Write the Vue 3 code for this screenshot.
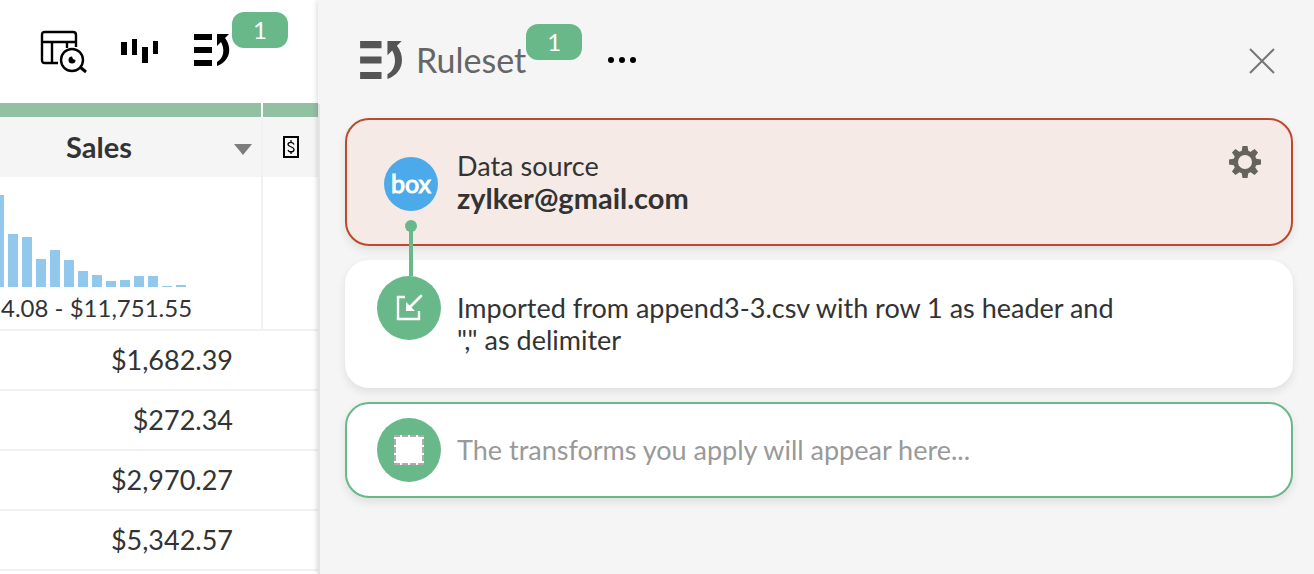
<script setup>
const bars = [92, 53, 50, 28, 37, 27, 16, 12, 6, 7, 11, 11, 1, 2]
const rows = ['$1,682.39', '$272.34', '$2,970.27', '$5,342.57', '']
</script>

<template>
  <div class="page">
    <main class="sheet">
      <div class="toolbar">
        <button type="button" class="tool" aria-label="Preview table">
          <svg width="48" height="44" viewBox="0 0 48 44" fill="none" stroke="#000" stroke-width="2.400">
            <path d="M18 33H5q-3 0-3-3V5q0-3 3-3h28q3 0 3 3v12M2 12h34M12 12v21M27 12v6" />
            <circle cx="32" cy="30" r="11" />
            <path d="M40 37l6 5" stroke-width="3" />
            <path d="M32 26.500a3.500 3.500 0 1 0 3.500 3.500l-2.500-1z" fill="#000" stroke="none" />
          </svg>
        </button>
        <button type="button" class="tool" aria-label="Data quality">
          <svg width="40" height="28" viewBox="0 0 40 28" fill="#000">
            <path d="M1 6h6v13H1zM12 3h5v16h-5zM22 11h6v16h-6zM33 5h5v13h-5z" />
          </svg>
        </button>
        <button type="button" class="tool" aria-label="Ruleset, 1 rule">
          <svg width="40" height="32" viewBox="-2 0 40 32" fill="#000">
            <path d="M0 0h18v6H0zM0 13h18v6H0zM0 26h18v6H0zM23 0h12l-4 4c7 9 6 23-8 28v-4c7-4 8-13 4-20l-4 4z" />
          </svg>
          <span class="badge tool-badge">1</span>
        </button>
      </div>

      <table class="grid">
        <colgroup><col class="col-sales"><col></colgroup>
        <thead>
          <tr class="head">
            <th scope="col">
              <div class="head-cell">
                <span class="name">Sales</span>
                <button type="button" class="caret" aria-label="Column options">
                  <svg width="18" height="11" viewBox="0 0 18 11"><path d="M0 0h18L9 11z" fill="#7d7d7d" /></svg>
                </button>
              </div>
            </th>
            <th scope="col" aria-label="Currency column">
              <svg class="currency" width="16" height="22" viewBox="0 0 16 22" fill="none" stroke="#000">
                <path d="M1 1h14v20H1z" stroke-width="2" />
                <path d="M11 8.500C10 5.500 5 6 5 8.500s6 2 6 5-5 3.500-6 .5M8 4v3M8 15v3" stroke-width="1.300" />
              </svg>
            </th>
          </tr>
        </thead>
        <tbody>
          <tr class="summary">
            <td>
              <div class="chart">
                <i v-for="(h, i) in bars" :key="i" :style="{ height: h + 'px' }"></i>
              </div>
              <div class="range">4.08 - $11,751.55</div>
            </td>
            <td></td>
          </tr>
          <tr v-for="(v, i) in rows" :key="i" class="row"><td>{{ v }}</td><td></td></tr>
        </tbody>
      </table>
    </main>

    <aside class="panel">
      <header class="panel-head">
        <svg width="43" height="38" viewBox="0 0 36 32" fill="#555">
          <path d="M0 0h18v6H0zM0 13h18v6H0zM0 26h18v6H0zM23 0h12l-4 4c7 9 6 23-8 28v-4c7-4 8-13 4-20l-4 4z" />
        </svg>
        <h1>Ruleset</h1>
        <span class="badge">1</span>
        <button type="button" class="more" aria-label="More options">
          <svg width="30" height="8" viewBox="0 0 30 8">
            <circle cx="4" cy="4" r="3" /><circle cx="15" cy="4" r="3" /><circle cx="26" cy="4" r="3" />
          </svg>
        </button>
        <button type="button" class="close" aria-label="Close">
          <svg width="26" height="26" viewBox="0 0 26 26" stroke="#777" stroke-width="2"><path d="M1 1l24 24M25 1L1 25" /></svg>
        </button>
      </header>

      <div class="cards">
        <section class="card source">
          <svg class="logo" width="64" height="72" viewBox="0 0 64 72" role="img" aria-label="Box">
            <circle cx="34" cy="42" r="27" fill="#4daaea" />
            <text x="34" y="51" text-anchor="middle" class="logo-text">box</text>
          </svg>
          <p>Data source<br><strong>zylker@gmail.com</strong></p>
          <button type="button" class="gear" aria-label="Data source settings">
            <svg width="32" height="32" viewBox="-16 -16 32 32">
              <g fill="#66625e">
                <path v-for="a in 8" :key="a" d="M-3.500-10l1-6h5l1 6z" :transform="`rotate(${a * 45})`" />
              </g>
              <circle r="9.300" fill="none" stroke="#66625e" stroke-width="4.600" />
            </svg>
          </button>
        </section>

        <section class="card">
          <div class="disc">
            <svg class="link" width="12" height="56" viewBox="0 0 12 56" fill="#68b88a">
              <circle cx="6" cy="6" r="6" /><path d="M4 6h4v50H4z" />
            </svg>
            <svg width="28" height="28" viewBox="0 0 28 28" fill="none" stroke="#fff">
              <path d="M10 3H3v22h21v-8" stroke-width="2.400" />
              <path d="M26 2L15 13" stroke-width="2.800" stroke-linecap="round" />
              <path d="M11 17V8l9 9z" fill="#fff" stroke="none" />
            </svg>
          </div>
          <p>Imported from append3-3.csv with row 1 as header and "," as delimiter</p>
        </section>

        <section class="card pending">
          <div class="disc">
            <svg width="30" height="30" viewBox="0 0 30 30">
              <path d="M0 0h30v30H0z" fill="#fff" />
              <path d="M1 1h28v28H1z" fill="none" stroke="#b0a9ad" stroke-width="2" stroke-dasharray="6 2" stroke-dashoffset="1" />
            </svg>
          </div>
          <p>The transforms you apply will appear here...</p>
        </section>
      </div>
    </aside>
  </div>
</template>

<style>
body { margin: 0; }
</style>

<style scoped>
.page {
  display: flex;
  height: 100vh;
  overflow: hidden;
  background: #fff;
  color: #333;
  font: 27px/32px Lato, "Liberation Sans", sans-serif;
}
button { padding: 0; border: 0; background: none; font: inherit; cursor: pointer; }
svg { display: block; flex: none; }
strong, .name { font-size: 29px; font-weight: 700; }
.sheet { flex: 0 0 318px; min-width: 0; }
.toolbar {
  display: flex;
  align-items: center;
  gap: 32px;
  box-sizing: border-box;
  height: 103px;
  padding: 0 0 3px 40px;
}
.tool { position: relative; }
.tool:first-child { padding-top: 4px; }
.badge {
  width: 56px;
  border-radius: 12px;
  background: #68b88a;
  color: #fff;
  font-size: 24px;
  line-height: 36px;
  text-align: center;
}
.tool-badge { position: absolute; left: 40px; bottom: 18px; }

.grid { width: 100%; border-collapse: separate; border-spacing: 0; table-layout: fixed; }
.col-sales { width: 263px; }
th, td { padding: 0; }
.head th {
  height: 60px;
  padding-top: 14px;
  background: linear-gradient(#92c0a2 14px, #f5f5f5 14px);
}
.head th:first-child {
  border-right: 2px solid #f1f1f1;
  border-image: linear-gradient(#fff 14px, #f1f1f1 14px) 0 2 0 0;
}
.head-cell { display: flex; align-items: center; padding-right: 9px; }
.name { flex: 1; padding-right: 36px; text-align: center; }
.caret { margin-top: 4px; }
.currency { margin-left: 20px; }
.summary td { height: 152px; border-bottom: 2px solid #f1f1f1; vertical-align: top; }
.summary td:first-child { border-right: 2px solid #f1f1f1; }
.chart { display: flex; align-items: flex-end; gap: 4px; height: 110px; overflow: hidden; }
.chart i { width: 10px; flex: none; background: #93c8ed; }
.chart i:first-child { width: 4px; }
.range { padding: 5px 0 0 1px; font-size: 24px; white-space: nowrap; }
.row td { height: 58px; border-bottom: 2px solid #f1f1f1; text-align: right; }
.row td:first-child { padding-right: 30px; }

.panel {
  position: relative;
  flex: 1;
  min-width: 0;
  background: #f5f5f5;
  box-shadow: 0 0 6px rgba(0, 0, 0, 0.2);
}
.panel-head {
  display: flex;
  align-items: center;
  box-sizing: border-box;
  height: 104px;
  padding: 0 39px 0 42px;
}
.panel-head > svg { margin-top: 16px; }
h1 {
  margin: 16px 0 0 13px;
  color: #666;
  font-size: 34px;
  font-weight: 400;
  line-height: 40px;
}
.panel-head .badge { margin: 0 25px 20px 0; }
.more { margin-top: 16px; }
.close { margin: 18px 0 0 auto; }
.cards {
  display: flex;
  flex-direction: column;
  gap: 14px;
  box-sizing: border-box;
  min-height: calc(100% - 104px);
  padding: 14px 21px 20px 25px;
  border-left: 2px solid #e4e4e4;
}
.card {
  display: flex;
  align-items: flex-start;
  gap: 16px;
  box-sizing: border-box;
  min-height: 128px;
  padding: 14px 30px;
  border: 2px solid #fff;
  border-radius: 24px;
  background: #fff;
  box-shadow: 0 4px 10px rgba(0, 0, 0, 0.09);
}
.card p { max-width: 670px; margin: 16px 0 0; }
.source { border-color: #ba4a2e; background: #f5eae6; }
.logo { margin-top: 8px; }
.logo-text { fill: #fff; stroke: #fff; stroke-width: 1px; font-size: 25px; }
.gear { margin: 12px 0 0 auto; }
.pending { min-height: 96px; border-color: #68b88a; color: #999; }
.disc {
  position: relative;
  display: grid;
  place-items: center;
  flex: none;
  width: 64px;
  height: 64px;
  border-radius: 50%;
  background: #68b88a;
}
.link { position: absolute; left: 28px; bottom: 64px; }
</style>
